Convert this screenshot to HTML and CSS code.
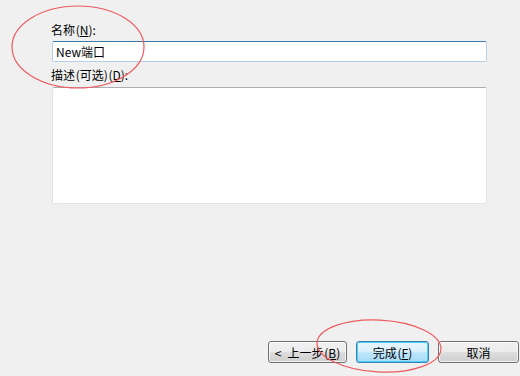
FILE: index.html
```html
<!DOCTYPE html>
<html lang="zh-CN">
<head>
<meta charset="utf-8">
<title>新建端口</title>
<link rel="stylesheet" href="styles.css">
</head>
<body>
<div class="page">
  <div class="form">
    <label class="label" for="name">名称 (<u>N</u>):</label>
    <input class="name-input" id="name" type="text" value="New端口">
    <label class="label label-desc" for="desc">描述 (可选) (<u>D</u>):</label>
    <textarea class="desc-input" id="desc"></textarea>
  </div>
  <div class="footer">
    <button class="btn btn-back"><span class="chev">&lt;</span>上一步 (<u>B</u>)</button>
    <button class="btn btn-default">完成 (<u>F</u>)</button>
    <button class="btn btn-cancel">取消</button>
  </div>
  <svg class="marks" width="520" height="376" viewBox="0 0 520 376">
    <ellipse cx="78" cy="47" rx="66" ry="41" />
    <ellipse cx="379" cy="346" rx="62" ry="26" transform="rotate(3 379 346)" />
  </svg>
</div>
</body>
</html>
```

FILE: styles.css
```css
html, body {
  margin: 0;
  padding: 0;
  background: #f0f0f0;
}

.page {
  position: relative;
  width: 520px;
  height: 376px;
  display: flex;
  flex-direction: column;
  font-family: "Noto Sans CJK SC", "DejaVu Sans", sans-serif;
  font-size: 12px;
  color: #000;
  background: #f0f0f0;
  overflow: hidden;
}

.form {
  display: flex;
  flex-direction: column;
  padding: 23px 33px 0 52px;
}

.label {
  display: block;
  height: 14px;
  line-height: 14px;
  margin-left: -1px;
  word-spacing: -2px;
}

.label u {
  text-underline-offset: 1px;
}

.label-desc {
  margin-top: 6px;
}

.name-input {
  box-sizing: border-box;
  margin: 4px 0 0;
  width: 435px;
  height: 21px;
  padding: 0 3px;
  font: inherit;
  font-size: 12px;
  color: #000;
  background: #fff;
  border: 1px solid #b5cfe7;
  border-top-color: #3d7bad;
  border-radius: 2px;
  outline: none;
}

.desc-input {
  box-sizing: border-box;
  margin: 5px 0 0;
  width: 435px;
  height: 117px;
  padding: 2px;
  font: inherit;
  resize: none;
  background: #fff;
  border: 1px solid #e2e3ea;
  border-top-color: #abadb3;
  border-radius: 2px;
  outline: none;
}

.footer {
  margin-top: auto;
  display: flex;
  justify-content: flex-end;
  gap: 9px;
  padding: 0 1px 13px 0;
}

.btn {
  box-sizing: border-box;
  height: 22px;
  padding: 0;
  font: inherit;
  font-size: 12px;
  color: #000;
  word-spacing: -2px;
  border: 1px solid #707070;
  border-radius: 3px;
  background: linear-gradient(#f2f2f2 0%, #ebebeb 48%, #dddddd 52%, #cfcfcf 100%);
  box-shadow: inset 0 0 0 1px rgba(255, 255, 255, 0.7);
}

.chev {
  margin-right: 6px;
}

.btn-back {
  width: 79px;
}

.btn-default {
  width: 73px;
  border-color: #3c7fb1;
  background: linear-gradient(#eaf6fd 0%, #d9f0fc 48%, #bee6fd 52%, #a7d9f5 100%);
  box-shadow: inset 0 0 0 1px #48d2fb;
}

.btn-cancel {
  width: 81px;
}

.marks {
  position: absolute;
  left: 0;
  top: 0;
  pointer-events: none;
}

.marks ellipse {
  fill: none;
  stroke: #ec5a5f;
  stroke-width: 1.2;
}
```
